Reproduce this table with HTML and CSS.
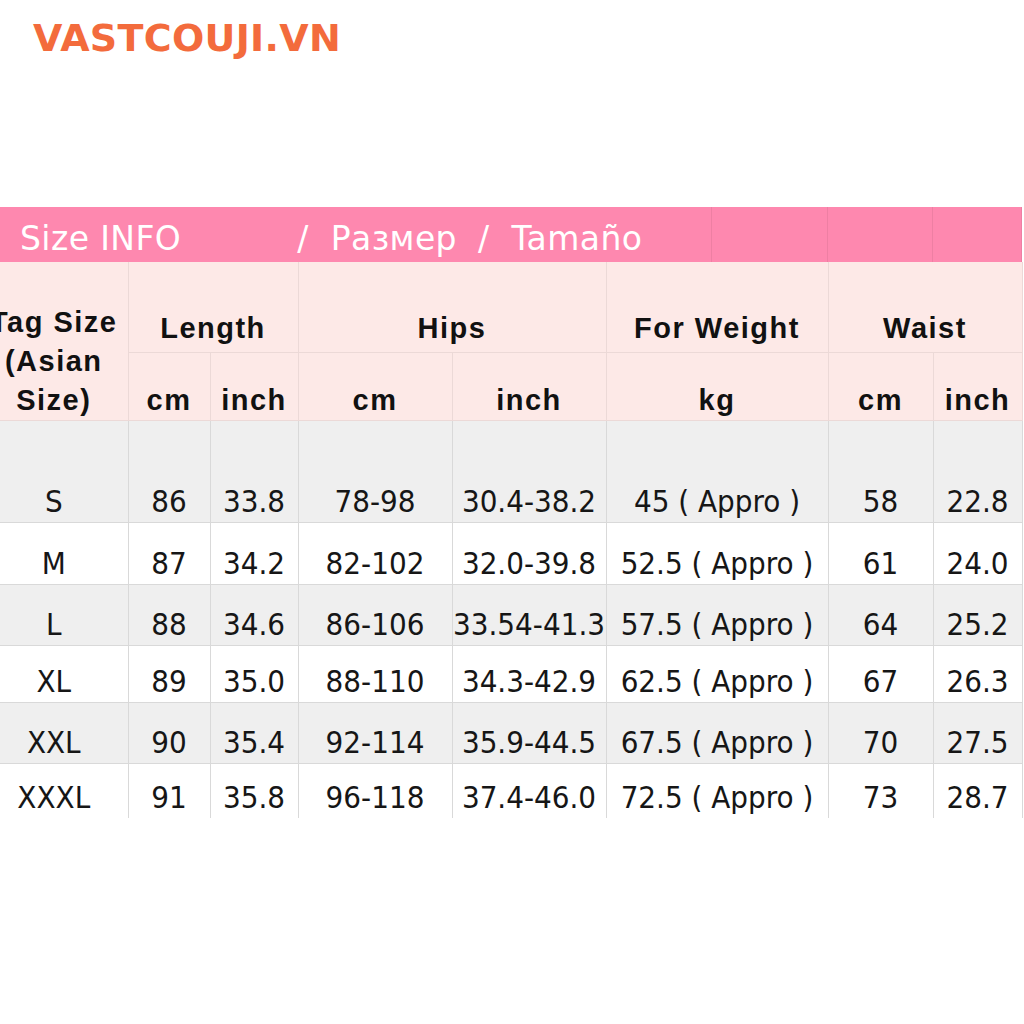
FILE: index.html
```html
<!DOCTYPE html>
<html lang="en">
<head>
<meta charset="utf-8">
<title>VASTCOUJI.VN – Size INFO</title>
<link rel="stylesheet" href="styles.css">
</head>
<body>
<header class="brand">VASTCOUJI.VN</header>
<section class="chart">
  <div class="banner">
    <div class="banner-title">
      <span class="t-size">Size INFO</span>
      <span class="t-slash1">/</span>
      <span class="t-ru">Размер</span>
      <span class="t-slash2">/</span>
      <span class="t-es">Tamaño</span>
    </div>
    <div class="banner-cell c116"></div>
    <div class="banner-cell c105"></div>
    <div class="banner-cell c89"></div>
  </div>
  <table class="sizes">
    <colgroup>
      <col class="w148"><col class="w82"><col class="w88"><col class="w154"><col class="w154"><col class="w222"><col class="w105"><col class="w89">
    </colgroup>
    <thead>
      <tr class="h1">
        <th rowspan="2" class="tag">Tag Size<br>(Asian<br>Size)</th>
        <th colspan="2">Length</th>
        <th colspan="2">Hips</th>
        <th>For Weight</th>
        <th colspan="2">Waist</th>
      </tr>
      <tr class="h2">
        <th>cm</th><th>inch</th><th>cm</th><th>inch</th><th>kg</th><th>cm</th><th>inch</th>
      </tr>
    </thead>
    <tbody>
      <tr class="gray r-s"><td>S</td><td>86</td><td>33.8</td><td>78-98</td><td>30.4-38.2</td><td>45 ( Appro )</td><td>58</td><td>22.8</td></tr>
      <tr class="white r-m"><td>M</td><td>87</td><td>34.2</td><td>82-102</td><td>32.0-39.8</td><td>52.5 ( Appro )</td><td>61</td><td>24.0</td></tr>
      <tr class="gray r-l"><td>L</td><td>88</td><td>34.6</td><td>86-106</td><td>33.54-41.3</td><td>57.5 ( Appro )</td><td>64</td><td>25.2</td></tr>
      <tr class="white r-xl"><td>XL</td><td>89</td><td>35.0</td><td>88-110</td><td>34.3-42.9</td><td>62.5 ( Appro )</td><td>67</td><td>26.3</td></tr>
      <tr class="gray r-xxl"><td>XXL</td><td>90</td><td>35.4</td><td>92-114</td><td>35.9-44.5</td><td>67.5 ( Appro )</td><td>70</td><td>27.5</td></tr>
      <tr class="white r-xxxl"><td>XXXL</td><td>91</td><td>35.8</td><td>96-118</td><td>37.4-46.0</td><td>72.5 ( Appro )</td><td>73</td><td>28.7</td></tr>
    </tbody>
  </table>
</section>
</body>
</html>
```
FILE: styles.css
```css
html, body {
  margin: 0;
  padding: 0;
  background: #ffffff;
  overflow: hidden;
}

.brand {
  height: 207px;
  box-sizing: border-box;
  padding: 16px 0 0 33px;
  font-family: "DejaVu Sans", sans-serif;
  font-weight: bold;
  font-size: 38px;
  line-height: 44px;
  letter-spacing: 0.3px;
  color: #f36b3c;
}

.chart {
  margin-left: -20px;
  width: 1042px;
}

.banner {
  display: flex;
  height: 55px;
  background: #fe88af;
  color: #ffffff;
  font-family: "DejaVu Sans", sans-serif;
  font-size: 33px;
  letter-spacing: 0.4px;
}

.banner-title {
  width: 732px;
  box-sizing: border-box;
  display: flex;
  align-items: center;
  padding-left: 40px;
  padding-top: 8px;
  border-right: 1px solid #ee7fa3;
  white-space: nowrap;
}

.t-slash1 { margin-left: 116px; }
.t-ru { margin-left: 22px; }
.t-slash2 { margin-left: 21px; }
.t-es { margin-left: 22px; }

.banner-cell {
  box-sizing: border-box;
  border-right: 1px solid #ee7fa3;
}
.c116 { width: 116px; }
.c105 { width: 105px; }
.c89 { width: 89px; }

.sizes {
  border-collapse: collapse;
  table-layout: fixed;
  width: 1042px;
}

.w148 { width: 148px; }
.w82 { width: 82px; }
.w88 { width: 88px; }
.w154 { width: 154px; }
.w222 { width: 222px; }
.w105 { width: 105px; }
.w89 { width: 89px; }

.sizes th {
  background: #fde9e7;
  border: 1px solid #ecd9d7;
  border-top: none;
  font-family: "Liberation Sans", Arial, sans-serif;
  font-weight: bold;
  font-size: 29px;
  letter-spacing: 1.5px;
  line-height: 39px;
  color: #111111;
  text-align: center;
  vertical-align: bottom;
  padding: 0;
  white-space: nowrap;
}

.sizes th.tag {
  border-left: none;
  padding-bottom: 0;
}

.h1 { height: 90px; }
.h1 th { padding-bottom: 4px; }
.h1 th.tag { padding-bottom: 0; }
.h2 { height: 68px; }

.sizes td {
  border: 1px solid #d9d9d9;
  font-family: "DejaVu Sans Condensed", "DejaVu Sans", sans-serif;
  font-stretch: condensed;
  font-size: 31px;
  line-height: 36px;
  color: #161616;
  text-align: center;
  vertical-align: bottom;
  padding: 0 0 3px 0;
  white-space: nowrap;
  overflow: visible;
}

.sizes td:first-child { border-left: none; }
.sizes tr:last-child td { border-bottom: none; }

.gray td { background: #efefef; }
.white td { background: #ffffff; }

.r-s { height: 102px; }
.r-m { height: 62px; }
.r-l { height: 61px; }
.r-xl { height: 57px; }
.r-xxl { height: 61px; }
.r-xxxl { height: 55px; }
```
